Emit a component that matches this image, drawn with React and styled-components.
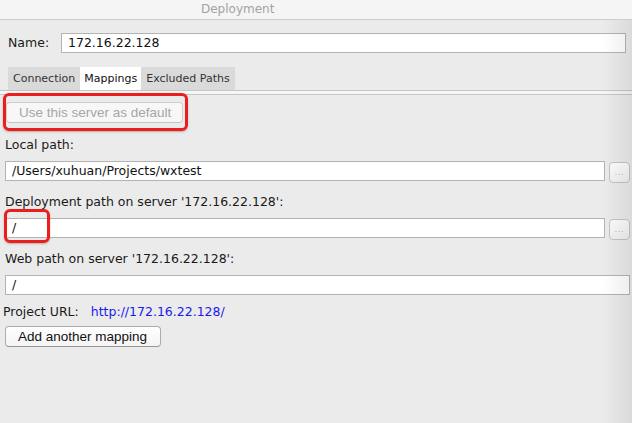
import React from 'react';
import styled, { createGlobalStyle } from 'styled-components';

const GlobalStyle = createGlobalStyle`
  html, body {
    margin: 0;
    padding: 0;
    background: #ebebeb;
  }
  body {
    font-family: "DejaVu Sans", "Liberation Sans", sans-serif;
    font-size: 12.5px;
    color: #222;
  }
`;

const Window = styled.div`
  position: relative;
  width: 632px;
  height: 423px;
  overflow: hidden;
  background: #ebebeb;
`;

const TitleBar = styled.div`
  height: 19px;
  border-bottom: 1px solid #cdcdcd;
  background: #f5f5f5;
  display: flex;
  align-items: center;
  padding-left: 201px;
`;

const Title = styled.span`
  font-size: 12px;
  color: #a3a3a3;
  line-height: 19px;
`;

const NameRow = styled.div`
  display: flex;
  align-items: center;
  margin-top: 13px;
  padding: 0 6px 0 8px;
`;

const NameLabel = styled.span`
  width: 53px;
  line-height: 20px;
  color: #1a1a1a;
`;

const Field = styled.div`
  flex: 1;
  position: relative;
  height: 18px;
  line-height: 18px;
  border: 1px solid #b3b3b3;
  background: #fff;
  padding-left: 6px;
  color: #111;
  white-space: nowrap;
`;

const Tabs = styled.div`
  display: flex;
  margin-top: 14px;
  padding-left: 8px;
  height: 23px;
`;

const Tab = styled.div`
  padding: 0 ${(p) => p.$pad || 5}px;
  font-size: 11px;
  line-height: 23px;
  background: ${(p) => (p.$active ? '#ffffff' : '#dadada')};
  color: ${(p) => (p.$active ? '#111' : '#333')};
`;

const TabRule = styled.div`
  height: 3px;
  border-top: 1px solid #c6c6c6;
  border-bottom: 1px solid #c6c6c6;
  background: #f6f6f6;
`;

const Panel = styled.div`
  display: flex;
  flex-direction: column;
  padding: 7px 2px 0 5px;
`;

const Highlight = styled.div`
  position: relative;
  align-self: flex-start;
  margin-left: 1px;

  &::after {
    content: '';
    position: absolute;
    top: -9px;
    left: -3px;
    right: -5px;
    bottom: -8px;
    border: 3px solid #ec1d1d;
    border-radius: 6px;
    box-shadow: 0 1px 2px rgba(0, 0, 0, 0.25);
    pointer-events: none;
  }
`;

const Button = styled.button`
  display: block;
  box-sizing: border-box;
  font-family: "Liberation Sans", Arial, sans-serif;
  font-size: 13.5px;
  height: 21px;
  line-height: 19px;
  padding: 0 0 0 12px;
  border-radius: 4px;
  border: 1px solid ${(p) => (p.disabled ? '#cfcfcf' : '#acacac')};
  border-bottom-color: ${(p) => (p.disabled ? '#c4c4c4' : '#969696')};
  background: ${(p) => (p.disabled ? '#f7f7f7' : 'linear-gradient(#ffffff, #f4f4f4)')};
  color: ${(p) => (p.disabled ? '#a6a6a6' : '#111')};
  text-align: left;
  white-space: nowrap;
  width: ${(p) => p.$w}px;
  cursor: default;
`;

const FieldLabel = styled.div`
  line-height: 16px;
  margin-top: ${(p) => p.$top || 13}px;
  margin-bottom: 8px;
  color: #1a1a1a;
  white-space: nowrap;
`;

const FieldRow = styled.div`
  display: flex;
  align-items: flex-start;
  gap: 4px;
  height: 20px;
`;

const Browse = styled.div`
  flex: 0 0 auto;
  width: 19px;
  height: 19px;
  margin-top: 1px;
  border: 1px solid #c4c4c4;
  border-radius: 4px;
  background: linear-gradient(#fdfdfd, #f1f1f1);
  color: #9a9a9a;
  font-size: 7px;
  line-height: 21px;
  text-align: center;
  letter-spacing: 1px;
`;

const Mark = styled.div`
  position: absolute;
  left: -2px;
  top: -10px;
  width: 40px;
  height: 28px;
  border: 3px solid #ec1d1d;
  border-radius: 6px;
  box-shadow: 0 1px 2px rgba(0, 0, 0, 0.25);
  pointer-events: none;
`;

const UrlRow = styled.div`
  display: flex;
  margin-top: 9px;
  margin-left: -2px;
  line-height: 16px;
  color: #1a1a1a;
`;

const Link = styled.span`
  margin-left: 12px;
  color: #1a1aee;
`;

const ButtonRow = styled.div`
  margin-top: 6px;
`;

const EdgeShade = styled.div`
  position: absolute;
  top: 20px;
  right: 0;
  bottom: 0;
  width: 30px;
  background: linear-gradient(to right, rgba(0, 0, 0, 0), rgba(0, 0, 0, 0.07));
  pointer-events: none;
`;

const App = () => {
  return (
    <Window>
      <GlobalStyle />
      <TitleBar>
        <Title>Deployment</Title>
      </TitleBar>

      <NameRow>
        <NameLabel>Name:</NameLabel>
        <Field>172.16.22.128</Field>
      </NameRow>

      <Tabs>
        <Tab $pad={5}>Connection</Tab>
        <Tab $active $pad={4}>Mappings</Tab>
        <Tab $pad={5}>Excluded Paths</Tab>
      </Tabs>
      <TabRule />

      <Panel>
        <Highlight>
          <Button disabled $w={177}>Use this server as default</Button>
        </Highlight>

        <FieldLabel $top={14}>Local path:</FieldLabel>
        <FieldRow>
          <Field>/Users/xuhuan/Projects/wxtest</Field>
          <Browse>...</Browse>
        </FieldRow>

        <FieldLabel>Deployment path on server '172.16.22.128':</FieldLabel>
        <FieldRow>
          <Field>
            /
            <Mark />
          </Field>
          <Browse>...</Browse>
        </FieldRow>

        <FieldLabel>Web path on server '172.16.22.128':</FieldLabel>
        <FieldRow>
          <Field>/</Field>
        </FieldRow>

        <UrlRow>
          Project URL:
          <Link>http://172.16.22.128/</Link>
        </UrlRow>

        <ButtonRow>
          <Button $w={156}>Add another mapping</Button>
        </ButtonRow>
      </Panel>

      <EdgeShade />
    </Window>
  );
};

export default App;
